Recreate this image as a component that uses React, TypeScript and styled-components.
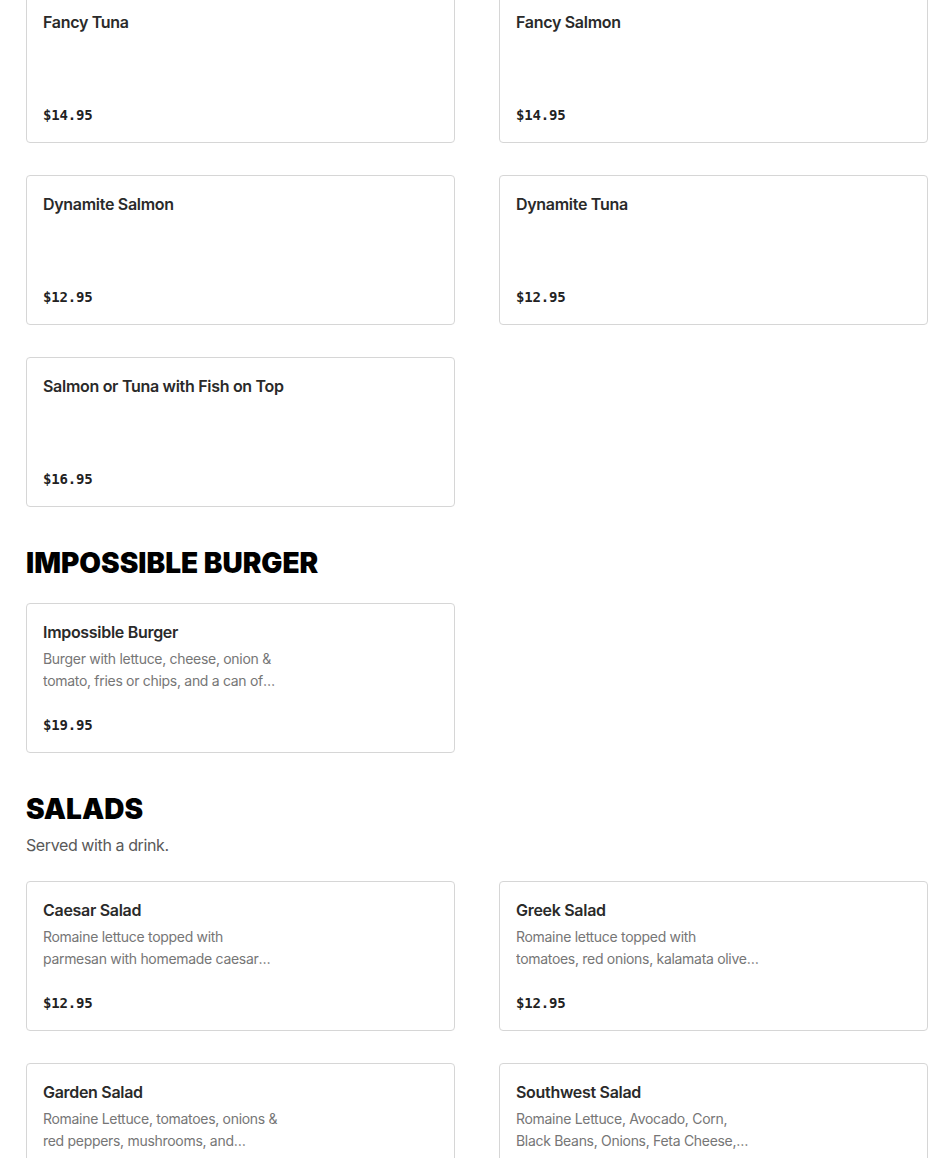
import React from "react";
import styled, { createGlobalStyle } from "styled-components";

const Global = createGlobalStyle`
  html, body { margin: 0; padding: 0; background: #fff; }
  body { font-family: Inter, "Noto Sans", sans-serif; color: #222; }
  * { box-sizing: border-box; }
`;

const Page = styled.main`
  padding: 0 22px 0 26px;
  margin-top: -7px;
  display: flex;
  flex-direction: column;
`;

const Section = styled.section`
  display: flex;
  flex-direction: column;
  & + & { margin-top: 38px; }
`;

const Heading = styled.h2`
  margin: 0;
  font-family: Inter, "Liberation Sans", sans-serif;
  font-weight: 900;
  font-size: 28px;
  line-height: 36px;
  color: #000;
  letter-spacing: 0;
`;

const Subtitle = styled.p`
  margin: 6px 0 0;
  font-size: 16px;
  line-height: 24px;
  letter-spacing: -0.4px;
  color: #595959;
`;

const Grid = styled.div<{ $spaced: boolean }>`
  display: grid;
  grid-template-columns: 1fr 1fr;
  column-gap: 44px;
  row-gap: 32px;
  margin-top: ${(p) => (p.$spaced ? "24px" : "22px")};
  &:first-child { margin-top: 0; }
`;

const Card = styled.article`
  border: 1px solid #d6d6d6;
  border-radius: 4px;
  min-height: 150px;
  padding: 16px 16px 17px;
  display: flex;
  flex-direction: column;
  background: #fff;
`;

const Title = styled.h3`
  margin: 0;
  font-size: 16px;
  line-height: 24px;
  font-weight: 600;
  letter-spacing: -0.3px;
  color: #2a2a2a;
`;

const Desc = styled.p`
  margin: 4px 0 0;
  max-width: 245px;
  font-size: 14px;
  line-height: 22px;
  letter-spacing: -0.3px;
  color: #767676;
  display: -webkit-box;
  -webkit-line-clamp: 2;
  -webkit-box-orient: vertical;
  overflow: hidden;
`;

const Price = styled.span`
  margin-top: auto;
  font-family: "DejaVu Sans Mono", "Liberation Mono", monospace;
  font-weight: 700;
  font-size: 14px;
  line-height: 20px;
  letter-spacing: -0.2px;
  color: #222;
`;

type Item = { name: string; desc?: string; price: string };
type Sec = { title?: string; subtitle?: string; items: Item[] };

const sections: Sec[] = [
  {
    items: [
      { name: "Fancy Tuna", price: "$14.95" },
      { name: "Fancy Salmon", price: "$14.95" },
      { name: "Dynamite Salmon", price: "$12.95" },
      { name: "Dynamite Tuna", price: "$12.95" },
      { name: "Salmon or Tuna with Fish on Top", price: "$16.95" },
    ],
  },
  {
    title: "IMPOSSIBLE BURGER",
    items: [
      {
        name: "Impossible Burger",
        desc: "Burger with lettuce, cheese, onion & tomato, fries or chips, and a can of soda.",
        price: "$19.95",
      },
    ],
  },
  {
    title: "SALADS",
    subtitle: "Served with a drink.",
    items: [
      {
        name: "Caesar Salad",
        desc: "Romaine lettuce topped with parmesan with homemade caesar dressing and croutons.",
        price: "$12.95",
      },
      {
        name: "Greek Salad",
        desc: "Romaine lettuce topped with tomatoes, red onions, kalamata olives and feta cheese.",
        price: "$12.95",
      },
      {
        name: "Garden Salad",
        desc: "Romaine Lettuce, tomatoes, onions & red peppers, mushrooms, and cucumbers.",
        price: "$11.95",
      },
      {
        name: "Southwest Salad",
        desc: "Romaine Lettuce, Avocado, Corn, Black Beans, Onions, Feta Cheese, Tortilla Strips.",
        price: "$13.95",
      },
    ],
  },
];

export default function App() {
  return (
    <>
      <Global />
      <Page>
        {sections.map((s, i) => (
          <Section key={i}>
            {s.title && <Heading>{s.title}</Heading>}
            {s.subtitle && <Subtitle>{s.subtitle}</Subtitle>}
            <Grid $spaced={!!s.subtitle}>
              {s.items.map((it) => (
                <Card key={it.name}>
                  <Title>{it.name}</Title>
                  {it.desc && <Desc>{it.desc}</Desc>}
                  <Price>{it.price}</Price>
                </Card>
              ))}
            </Grid>
          </Section>
        ))}
      </Page>
    </>
  );
}
